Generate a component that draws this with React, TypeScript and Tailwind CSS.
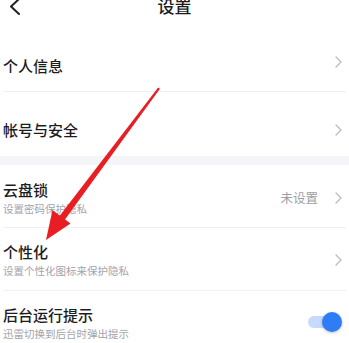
import React from "react";

const font = { fontFamily: '"Noto Sans CJK SC", "Noto Sans", sans-serif' };

function Chevron({ className = "" }: { className?: string }) {
  return (
    <svg width="7" height="12" viewBox="0 0 7 12" className={className} fill="none">
      <path d="M1 1l5 5-5 5" stroke="#b9b9c0" strokeWidth="1.2" strokeLinecap="round" strokeLinejoin="round" />
    </svg>
  );
}

function Divider() {
  return <div className="mx-[3px] h-px bg-[#eeeff4]" />;
}

function Toggle() {
  return (
    <div className="relative h-[20px] w-[34px]">
      <div className="absolute left-0 top-[4px] h-[12px] w-[28px] rounded-full bg-[#c6dafd]" />
      <div className="absolute right-0 top-0 h-[20px] w-[20px] rounded-full bg-[#2f7cf7] shadow-[0_1px_3px_rgba(0,0,0,0.25)]" />
    </div>
  );
}

function DetailRow({
  title,
  sub,
  right,
  rightTop,
  titleTop,
}: {
  title: string;
  sub: string;
  right: React.ReactNode;
  rightTop: string;
  titleTop: string;
}) {
  return (
    <div className="flex h-[62px] items-start justify-between pl-[3px] pr-[7px]">
      <div className={`flex flex-col ${titleTop}`}>
        <span className="text-[15px] leading-[15px] font-medium text-[#1c1c1e]">{title}</span>
        <span className="mt-[5px] text-[10.5px] leading-[14px] text-[#a3a3ab]">{sub}</span>
      </div>
      <div className={rightTop}>{right}</div>
    </div>
  );
}

export default function App() {
  return (
    <div className="relative h-[343px] w-[349px] overflow-hidden bg-white" style={font}>
      {/* header */}
      <div className="relative flex h-[13px] items-center">
        <svg width="12" height="17" viewBox="0 0 12 17" className="absolute left-[8px] top-[-2px]" fill="none">
          <path d="M11 1L3 8.5 11 16" stroke="#222" strokeWidth="2" strokeLinecap="round" strokeLinejoin="round" />
        </svg>
        <span className="mx-auto -mt-[2px] text-[17px] leading-[17px] font-medium text-[#1c1c1e]">设置</span>
      </div>

      {/* 个人信息 */}
      <div className="flex h-[78px] items-end justify-between pb-[18px] pl-[3px] pr-[7px]">
        <span className="text-[15px] leading-[15px] font-medium text-[#1c1c1e]">个人信息</span>
        <Chevron className="mb-[5px]" />
      </div>
      <Divider />

      {/* 帐号与安全 */}
      <div className="flex h-[64px] items-start justify-between pl-[3px] pr-[7px] pt-[30px]">
        <span className="text-[15px] leading-[15px] font-medium text-[#1c1c1e]">帐号与安全</span>
        <Chevron className="mt-[2px]" />
      </div>
      <div className="h-[9px] bg-[#f4f5f9]" />

      <DetailRow
        title="云盘锁"
        sub="设置密码保护隐私"
        titleTop="pt-[17px]"
        rightTop="mt-[26px]"
        right={
          <div className="flex items-center gap-[17px]">
            <span className="text-[12.5px] leading-[13px] text-[#9d9da5]">未设置</span>
            <Chevron />
          </div>
        }
      />
      <Divider />
      <DetailRow
        title="个性化"
        sub="设置个性化图标来保护隐私"
        titleTop="pt-[16px]"
        rightTop="mt-[26px]"
        right={<Chevron />}
      />
      <Divider />
      <div className="flex h-[52px] items-start justify-between pl-[3px] pr-[7px]">
        <div className="flex flex-col pt-[16px]">
          <span className="text-[15px] leading-[15px] font-medium text-[#1c1c1e]">后台运行提示</span>
          <span className="mt-[5px] text-[10.5px] leading-[14px] text-[#a3a3ab]">迅雷切换到后台时弹出提示</span>
        </div>
        <div className="mt-[21px]">
          <Toggle />
        </div>
      </div>

      {/* red annotation arrow, slightly tapered shaft */}
      <svg className="pointer-events-none absolute left-0 top-0" width="349" height="343" viewBox="0 0 349 343">
        <polygon points="157.6,88.2 159.4,89.6 62.6,222.8 57.4,218.8" fill="#e81e22" />
        <circle cx="158.5" cy="88.9" r="1.1" fill="#e81e22" />
        <polygon points="46,240 52.5,210 70.5,223.5" fill="#e81e22" />
      </svg>
    </div>
  );
}
